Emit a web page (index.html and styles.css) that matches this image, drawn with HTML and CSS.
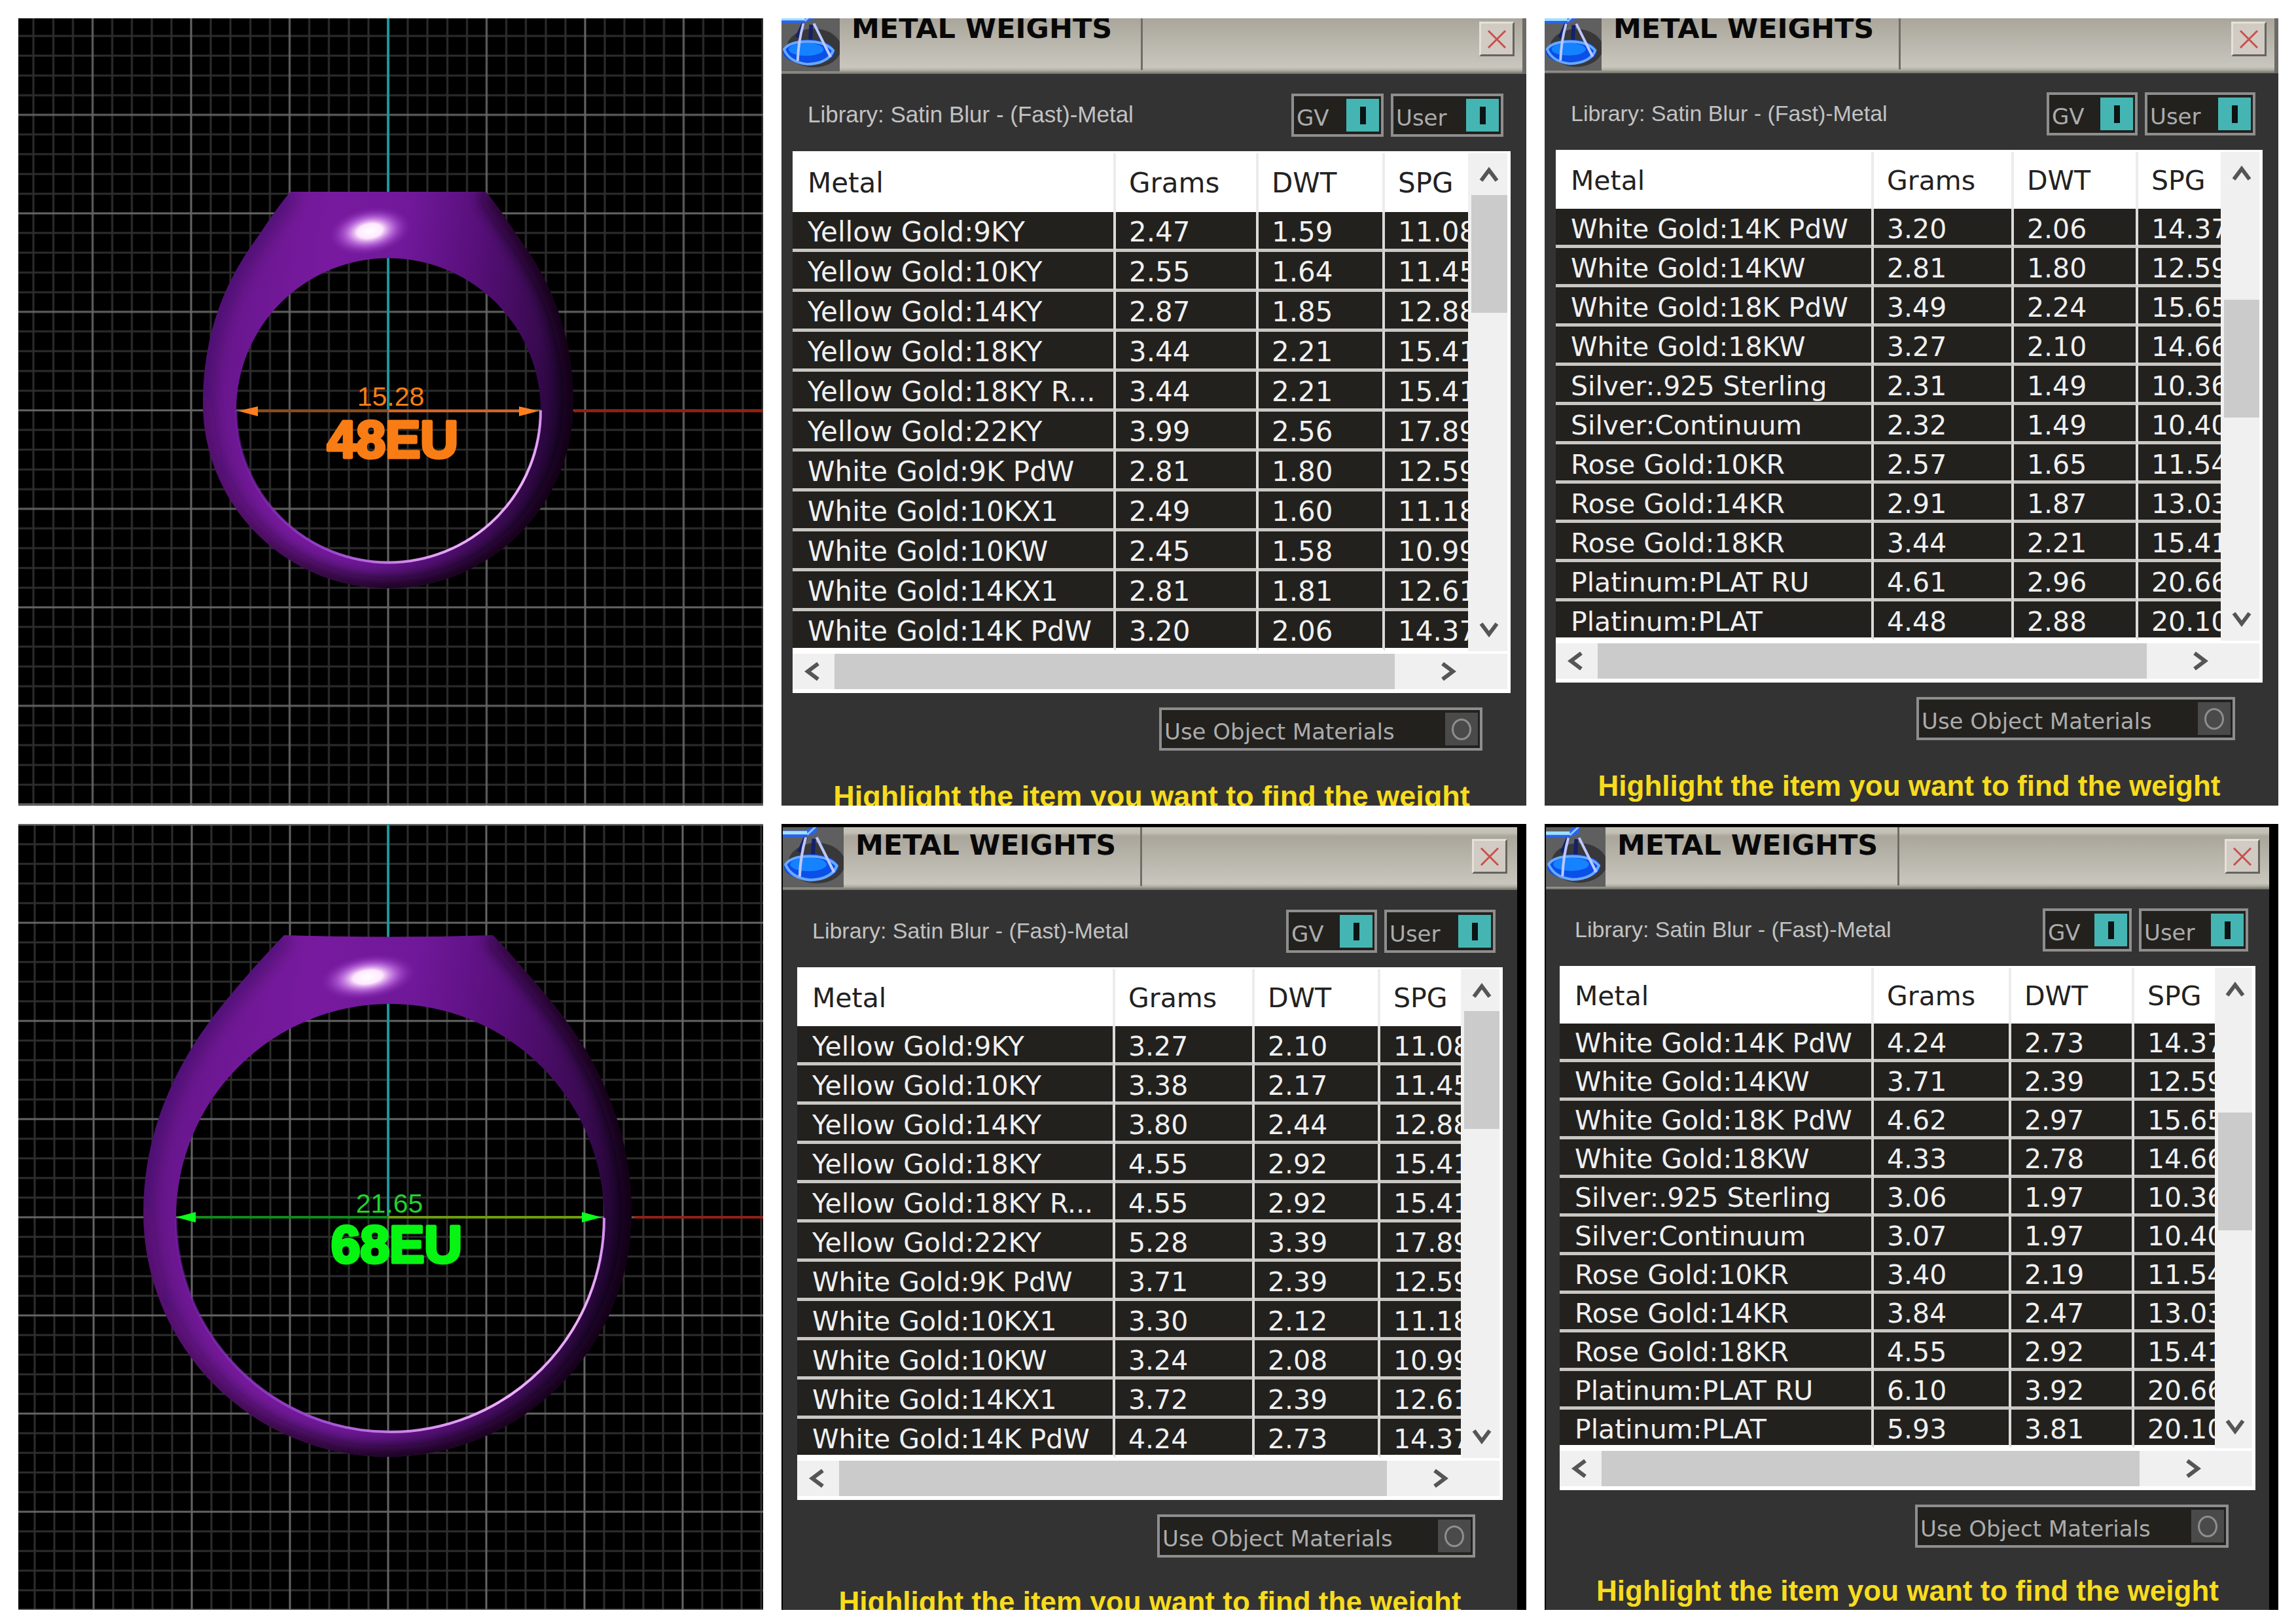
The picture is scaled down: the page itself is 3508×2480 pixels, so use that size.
FILE: index.html
```html
<!DOCTYPE html>
<html lang="en">
<head>
<meta charset="utf-8">
<title>Metal Weights</title>
<link rel="stylesheet" href="styles.css">
</head>
<body>
<svg class="defs" width="0" height="0" aria-hidden="true">
  <defs>
    <linearGradient id="metal" x1="0" x2="1" y1="0.35" y2="0.5">
      <stop offset="0" stop-color="#65158a"/><stop offset="0.3" stop-color="#781a9f"/><stop offset="0.5" stop-color="#70189a"/><stop offset="0.7" stop-color="#560f78"/><stop offset="0.88" stop-color="#3a0a52"/><stop offset="1" stop-color="#1e0430"/>
    </linearGradient>
    <linearGradient id="edge" x1="0" x2="1" y1="0" y2="0.6">
      <stop offset="0" stop-color="#12001c" stop-opacity="0.2"/><stop offset="0.4" stop-color="#12001c" stop-opacity="0.4"/><stop offset="0.8" stop-color="#08000c" stop-opacity="1"/>
    </linearGradient>
    <linearGradient id="rim" x1="0" x2="1" y1="0.3" y2="0.75">
      <stop offset="0" stop-color="#7a22b0" stop-opacity="0.5"/><stop offset="0.5" stop-color="#9a48cc"/><stop offset="0.85" stop-color="#f0b0ff"/><stop offset="1" stop-color="#8a30b8"/>
    </linearGradient>
    <radialGradient id="shine">
      <stop offset="0" stop-color="#fff"/><stop offset="0.3" stop-color="#ffe8ff"/><stop offset="0.6" stop-color="#d080f0" stop-opacity="0.6"/><stop offset="1" stop-color="#8020b0" stop-opacity="0"/>
    </radialGradient>
    <filter id="soft" x="-20%" y="-20%" width="140%" height="140%"><feGaussianBlur stdDeviation="12"/></filter>
    <pattern id="grid1" x="565" y="599" width="150.5" height="150.5" patternUnits="userSpaceOnUse">
      <path d="M30 0V151M60 0V151M90.500 0V151M120.500 0V151M0 30H151M0 60H151M0 90.500H151M0 120.500H151" stroke="#2d2d2d" stroke-width="3"/>
      <path d="M0 0V151M150.500 0V151M0 0H151M0 150.500H151" stroke="#646464" stroke-width="3"/>
    </pattern>
    <pattern id="grid2" x="565" y="601" width="150" height="150" patternUnits="userSpaceOnUse">
      <path d="M30 0V150M60 0V150M90 0V150M120 0V150M0 30H150M0 60H150M0 90H150M0 120H150" stroke="#2d2d2d" stroke-width="3"/>
      <path d="M0 0V150M150 0V150M0 0H150M0 150H150" stroke="#646464" stroke-width="3"/>
    </pattern>
    <clipPath id="clip1"><path clip-rule="evenodd" d="M416 265C394 290 376 320 351 355C325 395 282 470 282 588A283 283 0 0 0 848 588C848 470 805 395 778 355C753 320 736 290 714 265ZM333 599A232.500 232.500 0 1 1 798 599A232.500 232.500 0 1 1 333 599Z"/></clipPath>
    <clipPath id="clip2"><path clip-rule="evenodd" d="M406 170C388 189 372 206 351 230Q322 263 298 294C240 371 191 471 191 594A373 373 0 0 0 937 594C937 471 890 371 832 294Q808 263 779 230C758 206 744 189 725 170Q565 175 406 170ZM241 602A327 327 0 1 1 895 602A327 327 0 1 1 241 602Z"/></clipPath>
    <symbol id="flask" viewBox="0 0 90 96" preserveAspectRatio="xMaxYMax slice">
      <rect width="90" height="96" fill="#5f5f5f"/>
      <ellipse cx="50" cy="60" rx="42" ry="30" fill="#38383a"/>
      <path d="M0 12H34L46 2L52 4L50 15L40 20L28 22H0Z" fill="#2b62e8"/>
      <path d="M0 15H36" stroke="#9fe0ff" stroke-width="5"/>
      <path d="M36 18L50 5" stroke="#8cc4ff" stroke-width="3"/>
      <path d="M34 22L24 44M46 24L44 56" stroke="#15206a" stroke-width="6"/>
      <ellipse cx="42" cy="66" rx="40" ry="19" fill="#0a4fe8"/>
      <ellipse cx="38" cy="62" rx="27" ry="10" fill="#1583ff"/>
      <path d="M4 62Q12 50 40 50T80 64Q72 84 40 85Q12 82 4 62Z" fill="none" stroke="#69a8ff" stroke-width="4"/>
      <path d="M34 22Q26 50 25 80M50 22L76 74" fill="none" stroke="#bcc8ff" stroke-width="4"/>
    </symbol>
    <symbol id="up" viewBox="0 0 30 24"><path d="M3 22L15 6L27 22" fill="none" stroke="#555" stroke-width="6"/></symbol>
    <symbol id="down" viewBox="0 0 30 24"><path d="M3 2L15 18L27 2" fill="none" stroke="#555" stroke-width="6"/></symbol>
    <symbol id="left" viewBox="0 0 24 28"><path d="M21 2L5 14L21 26" fill="none" stroke="#555" stroke-width="6"/></symbol>
    <symbol id="right" viewBox="0 0 24 28"><path d="M3 2L19 14L3 26" fill="none" stroke="#555" stroke-width="6"/></symbol>
    <symbol id="cross" viewBox="0 0 30 30"><path d="M2 2L28 28M28 2L2 28" stroke="#c8504c" stroke-width="3"/></symbol>
  </defs>
</svg>

<main class="board">
  <svg class="viewport" viewBox="0 0 1138 1203" role="img" aria-label="Ring, size 48EU, inner diameter 15.28">
    <rect width="1138" height="1203" fill="#000"/>
    <rect width="1138" height="1203" fill="url(#grid1)"/>
    <path d="M565 0V599" stroke="#1b979b" stroke-width="4"/>
    <path d="M849 600H1138" stroke="#8e2216" stroke-width="4"/>
    <g clip-path="url(#clip1)">
      <rect x="282" y="264" width="567" height="608" fill="url(#metal)"/>
      <path d="M714 265C736 290 753 320 778 355C805 395 848 470 848 588A283 283 0 0 1 282 588C282 470 325 395 351 355C376 320 394 290 416 265" fill="none" stroke="url(#edge)" stroke-width="30" filter="url(#soft)"/>
      <ellipse cx="537" cy="325" rx="64" ry="36" fill="url(#shine)" transform="rotate(-10 537 325)"/>
    </g>
    <path d="M333 599A232.500 232.500 0 0 0 798 599" fill="none" stroke="url(#rim)" stroke-width="4"/>
    <path d="M362 600H565" stroke="#8a4a1c" stroke-width="4"/>
    <path d="M565 600H768" stroke="#d2642a" stroke-width="4"/>
    <path d="M336 600L366 593V608ZM795 600L765 593V608Z" fill="#ff7f1e"/>
    <text class="measure orange" x="569" y="592">15.28</text>
    <text class="size orange" x="572" y="671">48EU</text>
  </svg>

  <section class="panel panel-a">
    <div class="window">
      <header class="titlebar"><svg class="logo" aria-hidden="true"><use href="#flask"/></svg><h2 class="title">METAL WEIGHTS</h2><button class="close" aria-label="Close"><svg><use href="#cross"/></svg></button></header>
      <div class="body">
        <div class="options"><span class="library">Library: Satin Blur - (Fast)-Metal</span><label class="toggle gv"><span>GV</span><input type="checkbox" checked></label><label class="toggle user"><span>User</span><input type="checkbox" checked></label></div>
        <div class="list">
          <table class="metals">
            <colgroup><col><col class="c-grams"><col class="c-dwt"><col class="c-spg"></colgroup>
            <thead><tr><th>Metal</th><th>Grams</th><th>DWT</th><th>SPG</th></tr></thead>
            <tbody>
              <tr><td>Yellow Gold:9KY</td><td>2.47</td><td>1.59</td><td>11.08</td></tr>
              <tr><td>Yellow Gold:10KY</td><td>2.55</td><td>1.64</td><td>11.45</td></tr>
              <tr><td>Yellow Gold:14KY</td><td>2.87</td><td>1.85</td><td>12.88</td></tr>
              <tr><td>Yellow Gold:18KY</td><td>3.44</td><td>2.21</td><td>15.41</td></tr>
              <tr><td>Yellow Gold:18KY R...</td><td>3.44</td><td>2.21</td><td>15.41</td></tr>
              <tr><td>Yellow Gold:22KY</td><td>3.99</td><td>2.56</td><td>17.89</td></tr>
              <tr><td>White Gold:9K PdW</td><td>2.81</td><td>1.80</td><td>12.59</td></tr>
              <tr><td>White Gold:10KX1</td><td>2.49</td><td>1.60</td><td>11.18</td></tr>
              <tr><td>White Gold:10KW</td><td>2.45</td><td>1.58</td><td>10.99</td></tr>
              <tr><td>White Gold:14KX1</td><td>2.81</td><td>1.81</td><td>12.61</td></tr>
              <tr><td>White Gold:14K PdW</td><td>3.20</td><td>2.06</td><td>14.37</td></tr>
            </tbody>
          </table>
          <div class="vbar"><button class="arrow" aria-label="Scroll up"><svg><use href="#up"/></svg></button><div class="vtrack at-top"><div class="vthumb"></div></div><button class="arrow" aria-label="Scroll down"><svg><use href="#down"/></svg></button></div>
          <div class="hbar"><button class="harrow" aria-label="Scroll left"><svg><use href="#left"/></svg></button><div class="hthumb"></div><button class="harrow end" aria-label="Scroll right"><svg><use href="#right"/></svg></button></div>
        </div>
        <label class="toggle object"><span>Use Object Materials</span><input type="checkbox"></label>
        <p class="hint">Highlight the item you want to find the weight<br>for then press calculate</p>
      </div>
    </div>
  </section>

  <section class="panel panel-b">
    <div class="window">
      <header class="titlebar"><svg class="logo" aria-hidden="true"><use href="#flask"/></svg><h2 class="title">METAL WEIGHTS</h2><button class="close" aria-label="Close"><svg><use href="#cross"/></svg></button></header>
      <div class="body">
        <div class="options"><span class="library">Library: Satin Blur - (Fast)-Metal</span><label class="toggle gv"><span>GV</span><input type="checkbox" checked></label><label class="toggle user"><span>User</span><input type="checkbox" checked></label></div>
        <div class="list">
          <table class="metals">
            <colgroup><col><col class="c-grams"><col class="c-dwt"><col class="c-spg"></colgroup>
            <thead><tr><th>Metal</th><th>Grams</th><th>DWT</th><th>SPG</th></tr></thead>
            <tbody>
              <tr><td>White Gold:14K PdW</td><td>3.20</td><td>2.06</td><td>14.37</td></tr>
              <tr><td>White Gold:14KW</td><td>2.81</td><td>1.80</td><td>12.59</td></tr>
              <tr><td>White Gold:18K PdW</td><td>3.49</td><td>2.24</td><td>15.65</td></tr>
              <tr><td>White Gold:18KW</td><td>3.27</td><td>2.10</td><td>14.66</td></tr>
              <tr><td>Silver:.925 Sterling</td><td>2.31</td><td>1.49</td><td>10.36</td></tr>
              <tr><td>Silver:Continuum</td><td>2.32</td><td>1.49</td><td>10.40</td></tr>
              <tr><td>Rose Gold:10KR</td><td>2.57</td><td>1.65</td><td>11.54</td></tr>
              <tr><td>Rose Gold:14KR</td><td>2.91</td><td>1.87</td><td>13.03</td></tr>
              <tr><td>Rose Gold:18KR</td><td>3.44</td><td>2.21</td><td>15.41</td></tr>
              <tr><td>Platinum:PLAT RU</td><td>4.61</td><td>2.96</td><td>20.66</td></tr>
              <tr><td>Platinum:PLAT</td><td>4.48</td><td>2.88</td><td>20.10</td></tr>
            </tbody>
          </table>
          <div class="vbar"><button class="arrow" aria-label="Scroll up"><svg><use href="#up"/></svg></button><div class="vtrack at-middle"><div class="vthumb"></div></div><button class="arrow" aria-label="Scroll down"><svg><use href="#down"/></svg></button></div>
          <div class="hbar"><button class="harrow" aria-label="Scroll left"><svg><use href="#left"/></svg></button><div class="hthumb"></div><button class="harrow end" aria-label="Scroll right"><svg><use href="#right"/></svg></button></div>
        </div>
        <label class="toggle object"><span>Use Object Materials</span><input type="checkbox"></label>
        <p class="hint">Highlight the item you want to find the weight<br>for then press calculate</p>
      </div>
    </div>
  </section>

  <svg class="viewport" viewBox="0 0 1138 1201" role="img" aria-label="Ring, size 68EU, inner diameter 21.65">
    <rect width="1138" height="1201" fill="#000"/>
    <rect width="1138" height="1201" fill="url(#grid2)"/>
    <path d="M565 0V601" stroke="#1b979b" stroke-width="4"/>
    <path d="M941 601H1138" stroke="#8e2216" stroke-width="4"/>
    <g clip-path="url(#clip2)">
      <rect x="190" y="168" width="748" height="800" fill="url(#metal)"/>
      <path d="M725 170C744 189 758 206 779 230Q808 263 832 294C890 371 937 471 937 594A373 373 0 0 1 191 594C191 471 240 371 298 294Q322 263 351 230C372 206 388 189 406 170" fill="none" stroke="url(#edge)" stroke-width="30" filter="url(#soft)"/>
      <ellipse cx="534" cy="234" rx="74" ry="34" fill="url(#shine)" transform="rotate(-8 534 234)"/>
    </g>
    <path d="M241 602A327 327 0 0 0 895 602" fill="none" stroke="url(#rim)" stroke-width="4"/>
    <path d="M268 601H565" stroke="#128a1c" stroke-width="4"/>
    <path d="M565 601H864" stroke="#6f9a12" stroke-width="4"/>
    <path d="M241 601L271 593V609ZM891 601L861 593V609Z" fill="#0cff1c"/>
    <text class="measure green" x="567" y="594">21.65</text>
    <text class="size green" x="578" y="670">68EU</text>
  </svg>

  <section class="panel panel-c">
    <div class="window">
      <header class="titlebar"><svg class="logo" aria-hidden="true"><use href="#flask"/></svg><h2 class="title">METAL WEIGHTS</h2><button class="close" aria-label="Close"><svg><use href="#cross"/></svg></button></header>
      <div class="body">
        <div class="options"><span class="library">Library: Satin Blur - (Fast)-Metal</span><label class="toggle gv"><span>GV</span><input type="checkbox" checked></label><label class="toggle user"><span>User</span><input type="checkbox" checked></label></div>
        <div class="list">
          <table class="metals">
            <colgroup><col><col class="c-grams"><col class="c-dwt"><col class="c-spg"></colgroup>
            <thead><tr><th>Metal</th><th>Grams</th><th>DWT</th><th>SPG</th></tr></thead>
            <tbody>
              <tr><td>Yellow Gold:9KY</td><td>3.27</td><td>2.10</td><td>11.08</td></tr>
              <tr><td>Yellow Gold:10KY</td><td>3.38</td><td>2.17</td><td>11.45</td></tr>
              <tr><td>Yellow Gold:14KY</td><td>3.80</td><td>2.44</td><td>12.88</td></tr>
              <tr><td>Yellow Gold:18KY</td><td>4.55</td><td>2.92</td><td>15.41</td></tr>
              <tr><td>Yellow Gold:18KY R...</td><td>4.55</td><td>2.92</td><td>15.41</td></tr>
              <tr><td>Yellow Gold:22KY</td><td>5.28</td><td>3.39</td><td>17.89</td></tr>
              <tr><td>White Gold:9K PdW</td><td>3.71</td><td>2.39</td><td>12.59</td></tr>
              <tr><td>White Gold:10KX1</td><td>3.30</td><td>2.12</td><td>11.18</td></tr>
              <tr><td>White Gold:10KW</td><td>3.24</td><td>2.08</td><td>10.99</td></tr>
              <tr><td>White Gold:14KX1</td><td>3.72</td><td>2.39</td><td>12.61</td></tr>
              <tr><td>White Gold:14K PdW</td><td>4.24</td><td>2.73</td><td>14.37</td></tr>
            </tbody>
          </table>
          <div class="vbar"><button class="arrow" aria-label="Scroll up"><svg><use href="#up"/></svg></button><div class="vtrack at-top"><div class="vthumb"></div></div><button class="arrow" aria-label="Scroll down"><svg><use href="#down"/></svg></button></div>
          <div class="hbar"><button class="harrow" aria-label="Scroll left"><svg><use href="#left"/></svg></button><div class="hthumb"></div><button class="harrow end" aria-label="Scroll right"><svg><use href="#right"/></svg></button></div>
        </div>
        <label class="toggle object"><span>Use Object Materials</span><input type="checkbox"></label>
        <p class="hint">Highlight the item you want to find the weight<br>for then press calculate</p>
      </div>
    </div>
  </section>

  <section class="panel panel-d">
    <div class="window">
      <header class="titlebar"><svg class="logo" aria-hidden="true"><use href="#flask"/></svg><h2 class="title">METAL WEIGHTS</h2><button class="close" aria-label="Close"><svg><use href="#cross"/></svg></button></header>
      <div class="body">
        <div class="options"><span class="library">Library: Satin Blur - (Fast)-Metal</span><label class="toggle gv"><span>GV</span><input type="checkbox" checked></label><label class="toggle user"><span>User</span><input type="checkbox" checked></label></div>
        <div class="list">
          <table class="metals">
            <colgroup><col><col class="c-grams"><col class="c-dwt"><col class="c-spg"></colgroup>
            <thead><tr><th>Metal</th><th>Grams</th><th>DWT</th><th>SPG</th></tr></thead>
            <tbody>
              <tr><td>White Gold:14K PdW</td><td>4.24</td><td>2.73</td><td>14.37</td></tr>
              <tr><td>White Gold:14KW</td><td>3.71</td><td>2.39</td><td>12.59</td></tr>
              <tr><td>White Gold:18K PdW</td><td>4.62</td><td>2.97</td><td>15.65</td></tr>
              <tr><td>White Gold:18KW</td><td>4.33</td><td>2.78</td><td>14.66</td></tr>
              <tr><td>Silver:.925 Sterling</td><td>3.06</td><td>1.97</td><td>10.36</td></tr>
              <tr><td>Silver:Continuum</td><td>3.07</td><td>1.97</td><td>10.40</td></tr>
              <tr><td>Rose Gold:10KR</td><td>3.40</td><td>2.19</td><td>11.54</td></tr>
              <tr><td>Rose Gold:14KR</td><td>3.84</td><td>2.47</td><td>13.03</td></tr>
              <tr><td>Rose Gold:18KR</td><td>4.55</td><td>2.92</td><td>15.41</td></tr>
              <tr><td>Platinum:PLAT RU</td><td>6.10</td><td>3.92</td><td>20.66</td></tr>
              <tr><td>Platinum:PLAT</td><td>5.93</td><td>3.81</td><td>20.10</td></tr>
            </tbody>
          </table>
          <div class="vbar"><button class="arrow" aria-label="Scroll up"><svg><use href="#up"/></svg></button><div class="vtrack at-middle"><div class="vthumb"></div></div><button class="arrow" aria-label="Scroll down"><svg><use href="#down"/></svg></button></div>
          <div class="hbar"><button class="harrow" aria-label="Scroll left"><svg><use href="#left"/></svg></button><div class="hthumb"></div><button class="harrow end" aria-label="Scroll right"><svg><use href="#right"/></svg></button></div>
        </div>
        <label class="toggle object"><span>Use Object Materials</span><input type="checkbox"></label>
        <p class="hint">Highlight the item you want to find the weight<br>for then press calculate</p>
      </div>
    </div>
  </section>
</main>
</body>
</html>
```

FILE: styles.css
```css
* { box-sizing: border-box; }

body {
  margin: 0;
  background: #fff;
  font-family: "DejaVu Sans", Verdana, sans-serif;
}

.defs { position: absolute; }

.board {
  display: grid;
  grid-template-columns: 1138fr 1138fr 1121fr;
  gap: 28px;
  padding: 28px 27px 20px 28px;
}

/* ring views */
.viewport { display: block; width: 100%; height: auto; }
.measure, .size { font-family: "Liberation Sans", Arial, sans-serif; text-anchor: middle; }
.measure { font-size: 41px; }
.size { font-size: 80px; font-weight: bold; stroke-width: 5px; stroke-linejoin: round; }
.orange { fill: #f97d14; }
.size.orange { stroke: #f97d14; }
.green { fill: #1fd32c; }
.size.green { fill: #06f512; stroke: #06f512; }

/* weight windows: the row height comes from the ring view, the rest is cut */
.panel { contain: size; overflow: hidden; background: #000; }
.window { min-height: 100%; background: #333; }

.panel-a {
  --head: 85px; --title-line: 30px; --logo: 89px; --title-w: 463px; --close-top: 5px; --close-right: 12px;
  --edge: 6px; --side-l: 17px; --side-r: 24px; --top: 30px;
  --library: 35px; --gv: 141px; --user: 172px; --object: 494px; --object-r: 43px;
  --text: 42px; --thead: 90px; --row: 61px; --grams: 218px; --dwt: 193px; --spg: 127px; --bar: 60px;
  --hint: 45px; --hint-gap: 46px;
}
.panel-b {
  --head: 84px; --title-line: 30px; --logo: 87px; --title-w: 457px; --close-top: 5px; --close-right: 12px;
  --edge: 6px; --side-l: 17px; --side-r: 24px; --top: 29px;
  --library: 34px; --gv: 139px; --user: 169px; --object: 487px; --object-r: 42px;
  --text: 41px; --thead: 87px; --row: 60px; --grams: 214px; --dwt: 190px; --spg: 126px; --bar: 59px;
  --hint: 44px; --hint-gap: 46px;
}
.panel-c {
  --head: 96px; --title-line: 54px; --logo: 93px; --title-w: 456px; --close-top: 18px; --close-right: 15px;
  --edge: 0px; --side-l: 22px; --side-r: 22px; --top: 30px;
  --library: 34px; --gv: 139px; --user: 170px; --object: 486px; --object-r: 42px;
  --text: 41px; --thead: 87px; --row: 60px; --grams: 213px; --dwt: 192px; --spg: 123px; --bar: 59px;
  --hint: 44px; --hint-gap: 44px;
  padding: 5px 14px 0 2px;
}
.panel-d {
  --head: 95px; --title-line: 54px; --logo: 91px; --title-w: 449px; --close-top: 18px; --close-right: 14px;
  --edge: 0px; --side-l: 21px; --side-r: 21px; --top: 29px;
  --library: 34px; --gv: 136px; --user: 167px; --object: 479px; --object-r: 41px;
  --text: 41px; --thead: 85px; --row: 59px; --grams: 210px; --dwt: 188px; --spg: 123px; --bar: 57px;
  --hint: 44px; --hint-gap: 42px;
  padding: 5px 14px 0 2px;
}

.titlebar {
  display: flex;
  align-items: flex-start;
  height: var(--head);
  background: linear-gradient(#aaa69b, #c9c6be 88%, #b5b2a8 93%, #6e6d67);
  border-right: var(--edge) solid #6c6b66;
}
.panel-c .titlebar, .panel-d .titlebar {
  background: linear-gradient(#c4c1b6, #c4c1b6 8px, #aaa69b 14px, #c9c6be 90%, #b5b2a8 94%, #6e6d67);
}
.logo { width: var(--logo); height: calc(100% - 4px); flex: none; }
.title {
  width: var(--title-w);
  height: calc(100% - 6px);
  margin: 0;
  padding-left: 18px;
  border-right: 3px solid #6f6d66;
  color: #080808;
  font-size: 43px;
  font-weight: bold;
  line-height: var(--title-line);
  white-space: nowrap;
}
.close {
  display: grid;
  place-items: center;
  width: 54px;
  height: 53px;
  margin: var(--close-top) var(--close-right) 0 auto;
  padding: 0;
  background: #d2cbc3;
  border: 3px solid;
  border-color: #e4e0da #66645f #66645f #e4e0da;
}
.close svg { width: 30px; height: 30px; }

.body {
  display: flex;
  flex-direction: column;
  padding: var(--top) var(--side-r) 0 var(--side-l);
}
.options {
  display: flex;
  align-items: center;
  gap: 11px;
  padding: 0 11px 0 23px;
}
.library {
  margin-right: auto;
  color: #c2c2c2;
  font-family: "Liberation Sans", Arial, sans-serif;
  font-size: var(--library);
  line-height: 38px;
  padding-bottom: 3px;
  white-space: nowrap;
}

.toggle {
  display: flex;
  align-items: center;
  justify-content: space-between;
  height: 66px;
  padding: 4px 3px 4px 4px;
  background: #22211e;
  border: 4px solid #8e8e8e;
  color: #acacac;
  font-size: 34px;
  line-height: 40px;
  white-space: nowrap;
}
.toggle span { padding-top: 8px; }
.toggle input {
  appearance: none;
  display: grid;
  place-items: center;
  width: 50px;
  height: 50px;
  margin: 0;
  background: #4a4a4a;
}
.toggle input::before {
  content: "";
  width: 24px;
  height: 27px;
  border: 3px solid #8e8e8e;
  border-radius: 50%;
}
.toggle input:checked { background: #45b5b3; }
.toggle input:checked::before { width: 9px; border: 0; border-radius: 0; background: #0c1414; }
.gv { width: var(--gv); }
.user { width: var(--user); }
.object { align-self: flex-end; width: var(--object); margin: 22px var(--object-r) 0 0; }

.list {
  display: grid;
  grid-template-columns: 1fr var(--bar);
  margin-top: 22px;
  background: #fff;
  border: solid #fff;
  border-width: 3px 5px 6px 0;
}
.metals {
  width: 100%;
  table-layout: fixed;
  border-collapse: separate;
  border-spacing: 0;
  font-size: var(--text);
}
.c-grams { width: var(--grams); }
.c-dwt { width: var(--dwt); }
.c-spg { width: var(--spg); }
.metals th, .metals td {
  padding: 0 0 0 20px;
  overflow: hidden;
  font-weight: normal;
  text-align: left;
  white-space: nowrap;
}
.metals th:first-child, .metals td:first-child { padding-left: 23px; }
.metals th {
  height: var(--thead);
  border-right: 4px solid #ececec;
  color: #222;
}
.metals td {
  height: var(--row);
  padding-top: 6px;
  background: #22211e;
  border-right: 4px solid #dcdad8;
  border-bottom: 5px solid #c9c7c4;
  color: #f0f0f0;
  line-height: 48px;
}
.metals th:last-child, .metals td:last-child { border-right: 0; }
.metals tr:last-child td { border-bottom-color: #fff; }

.vbar { display: flex; flex-direction: column; background: #f0f0f0; }
.arrow, .harrow { display: flex; align-items: center; padding: 0; border: 0; background: none; }
.arrow { flex: none; height: 64px; padding-left: 4px; justify-content: center; }
.arrow svg { width: 30px; height: 24px; }
.vtrack { flex: 1; display: flex; flex-direction: column; }
.vthumb { height: 180px; margin-left: 5px; background: #cbcbcb; }
.at-middle { padding-top: 162px; }
.panel-d .at-middle { padding-top: 157px; }

.hbar {
  grid-column: 1 / -1;
  display: flex;
  height: 58px;
  border-top: 4px solid #fff;
  background: #f0f0f0;
}
.harrow { width: 64px; padding-left: 18px; }
.harrow svg { width: 24px; height: 28px; }
.hthumb { flex: 1; background: #cbcbcb; }
.harrow.end { width: 172px; padding-left: 70px; }

.hint {
  margin: var(--hint-gap) 0 0;
  color: #f7dc1e;
  font: bold var(--hint)/48px "Liberation Sans", Arial, sans-serif;
  text-align: center;
  white-space: nowrap;
}
```
